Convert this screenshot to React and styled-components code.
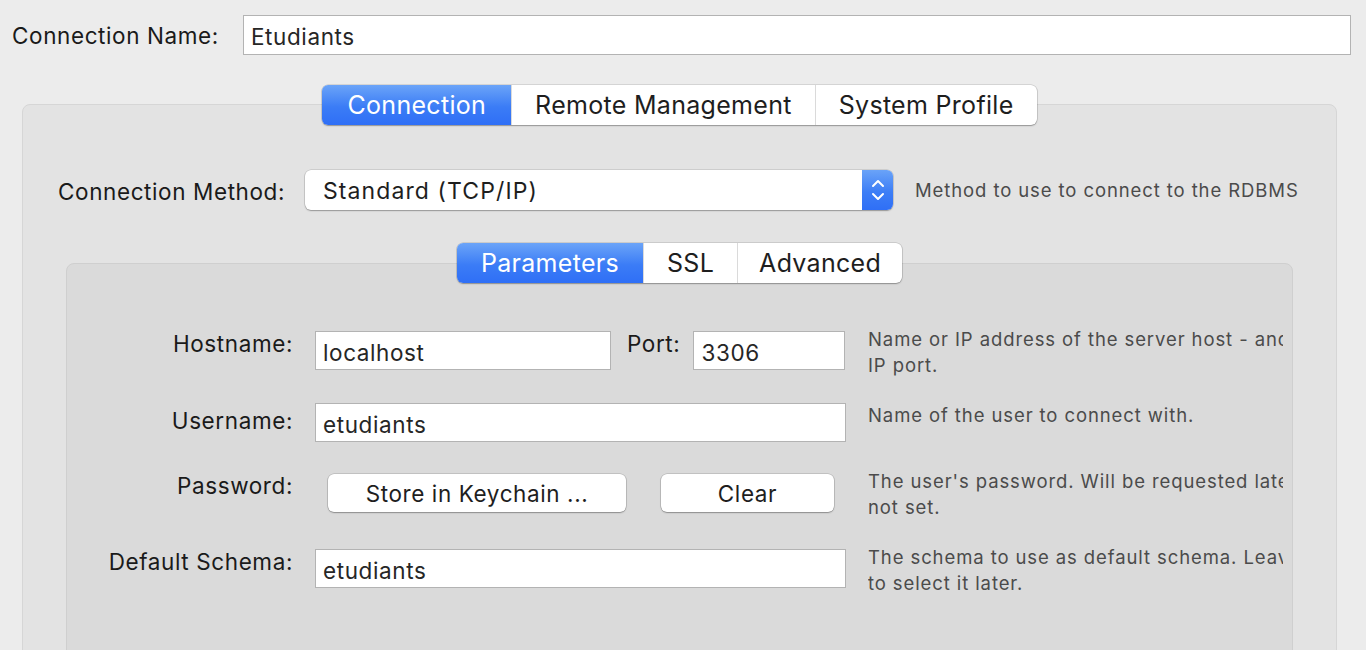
import React from "react";
import styled, { createGlobalStyle, css } from "styled-components";

const Global = createGlobalStyle`
  html, body { margin: 0; padding: 0; }
  body {
    background: #ececec;
    font-family: "Inter", "Noto Sans", "Liberation Sans", sans-serif;
    color: #1c1c1c;
    -webkit-font-smoothing: antialiased;
  }
`;

const Page = styled.div`
  width: 1366px;
  height: 650px;
  overflow: hidden;
  background: #ececec;
`;

const NameRow = styled.div`
  display: flex;
  align-items: center;
  padding: 15px 15px 0 12px;
`;

const Label = styled.div`
  width: ${(p) => p.$w}px;
  flex: none;
  font-size: 22.5px;
  letter-spacing: 0.6px;
  line-height: 26px;
  color: #1a1a1a;
  white-space: nowrap;
  margin-top: ${(p) => p.$mt || 0}px;
`;

const TextBox = styled.div`
  box-sizing: border-box;
  height: ${(p) => p.$h || 39}px;
  ${(p) => (p.$w ? css`width: ${p.$w}px; flex: none;` : css`flex: 1;`)}
  background: #fff;
  border: 1px solid #b3b3b3;
  padding: 3px 0 0 7px;
  display: flex;
  align-items: center;
  font-size: 22.5px;
  letter-spacing: 0.6px;
  color: #262626;
  white-space: nowrap;
`;

const OuterPanel = styled.div`
  margin: 49px 29px 0 22px;
  height: 600px;
  box-sizing: border-box;
  background: #e3e3e3;
  border: 1px solid #d6d6d6;
  border-radius: 8px;
`;

const TabBar = styled.div`
  display: flex;
  width: fit-content;
  margin: ${(p) => p.$top}px auto 0;
  height: 40px;
  border-radius: 6px;
  background: #fff;
  overflow: hidden;
  box-shadow: 0 0 0 0.5px rgba(0, 0, 0, 0.2), 0 1px 1.5px rgba(0, 0, 0, 0.28);
`;

const Tab = styled.div`
  padding: 0 ${(p) => p.$pad || 23}px;
  font-size: 25px;
  letter-spacing: 0.3px;
  line-height: 40px;
  color: #1e1e1e;
  white-space: nowrap;
  & + & {
    border-left: 1px solid #dadada;
  }
  ${(p) =>
    p.$active &&
    css`
      color: #fff;
      background: linear-gradient(to bottom, #6ba4f8 0%, #3b7cf6 55%, #2f6ff6 100%);
      & + * { border-left-color: transparent; }
    `}
`;

const MethodRow = styled.div`
  display: flex;
  align-items: center;
  margin-top: 45px;
  padding-left: 35px;
`;

const Select = styled.div`
  box-sizing: border-box;
  width: 588px;
  height: 40px;
  flex: none;
  display: flex;
  background: #fff;
  border-radius: 6px;
  box-shadow: 0 0 0 0.5px rgba(0, 0, 0, 0.18), 0 1px 1.5px rgba(0, 0, 0, 0.28);
  overflow: hidden;
`;

const SelectValue = styled.div`
  flex: 1;
  padding: 1px 0 0 18px;
  display: flex;
  align-items: center;
  font-size: 23px;
  letter-spacing: 1.1px;
  color: #1e1e1e;
`;

const Stepper = styled.div`
  width: 31px;
  flex: none;
  display: flex;
  align-items: center;
  justify-content: center;
  background: linear-gradient(to bottom, #6aa3f8 0%, #3d7ef6 55%, #2f6ff6 100%);
`;

const Hint = styled.div`
  margin-left: ${(p) => p.$ml || 0}px;
  margin-top: ${(p) => p.$mt || 0}px;
  font-size: 18.5px;
  line-height: 26px;
  letter-spacing: 0.9px;
  color: #4b4b4b;
  white-space: nowrap;
  overflow: hidden;
`;

const InnerPanel = styled.div`
  margin: 53px 43px 0;
  height: 500px;
  box-sizing: border-box;
  background: #dadada;
  border: 1px solid #cfcfcf;
  border-radius: 8px;
`;

const Params = styled.div`
  padding-top: 48px;
`;

const ParamRow = styled.div`
  display: grid;
  grid-template-columns: 226px 531px 415px;
  column-gap: 22px;
  align-items: start;
  height: ${(p) => p.$h}px;
  margin-top: ${(p) => p.$mt || 0}px;
`;

const ParamLabel = styled.div`
  text-align: right;
  font-size: 22.5px;
  letter-spacing: 0.6px;
  line-height: 26px;
  color: #1a1a1a;
  margin-top: ${(p) => p.$mt || 0}px;
  white-space: nowrap;
`;

const Field = styled.div`
  display: flex;
  align-items: flex-start;
`;

const InlineLabel = styled.div`
  font-size: 22.5px;
  letter-spacing: 0.6px;
  line-height: 26px;
  color: #1a1a1a;
  margin: ${(p) => p.$mt || 0}px 13px 0 16px;
`;

const Button = styled.div`
  box-sizing: border-box;
  width: ${(p) => p.$w}px;
  height: 38px;
  margin-left: ${(p) => p.$ml}px;
  padding-top: 1px;
  background: #fff;
  border-radius: 6px;
  box-shadow: 0 0 0 0.5px rgba(0, 0, 0, 0.22), 0 1px 1.5px rgba(0, 0, 0, 0.28);
  display: flex;
  align-items: center;
  justify-content: center;
  font-size: 22.5px;
  letter-spacing: 0.6px;
  color: #1e1e1e;
  white-space: nowrap;
`;

const HintLine = styled.div``;

const Chevrons = () => (
  <svg width="16" height="30" viewBox="0 0 16 30" fill="none">
    <path d="M3 11 L8 6 L13 11" stroke="#fff" strokeWidth="2" strokeLinecap="round" strokeLinejoin="round" />
    <path d="M3 19 L8 24 L13 19" stroke="#fff" strokeWidth="2" strokeLinecap="round" strokeLinejoin="round" />
  </svg>
);

export default function App() {
  return (
    <Page>
      <Global />
      <NameRow>
        <Label $w={231} $mt={2}>Connection Name:</Label>
        <TextBox $h={40}>Etudiants</TextBox>
      </NameRow>
      <OuterPanel>
        <TabBar $top={-20}>
          <Tab $active $pad={25}>Connection</Tab>
          <Tab>Remote Management</Tab>
          <Tab>System Profile</Tab>
        </TabBar>
        <MethodRow>
          <Label $w={247} $mt={4}>Connection Method:</Label>
          <Select>
            <SelectValue>Standard (TCP/IP)</SelectValue>
            <Stepper>
              <Chevrons />
            </Stepper>
          </Select>
          <Hint $ml={22}>Method to use to connect to the RDBMS</Hint>
        </MethodRow>
        <InnerPanel>
          <TabBar $top={-21}>
            <Tab $active $pad={24}>Parameters</Tab>
            <Tab>SSL</Tab>
            <Tab $pad={21}>Advanced</Tab>
          </TabBar>
          <Params>
            <ParamRow $h={39}>
              <ParamLabel $mt={0}>Hostname:</ParamLabel>
              <Field>
                <TextBox $w={296}>localhost</TextBox>
                <InlineLabel $mt={0}>Port:</InlineLabel>
                <TextBox $w={152}>3306</TextBox>
              </Field>
              <Hint $mt={-5}>
                <HintLine>Name or IP address of the server host - and TCP/</HintLine>
                <HintLine>IP port.</HintLine>
              </Hint>
            </ParamRow>
            <ParamRow $h={39} $mt={33}>
              <ParamLabel $mt={5}>Username:</ParamLabel>
              <Field>
                <TextBox $w={531}>etudiants</TextBox>
              </Field>
              <Hint $mt={-1}>Name of the user to connect with.</Hint>
            </ParamRow>
            <ParamRow $h={38} $mt={32}>
              <ParamLabel $mt={-1}>Password:</ParamLabel>
              <Field>
                <Button $w={298} $ml={13}>Store in Keychain ...</Button>
                <Button $w={173} $ml={35}>Clear</Button>
              </Field>
              <Hint $mt={-6}>
                <HintLine>The user's password. Will be requested later if it's</HintLine>
                <HintLine>not set.</HintLine>
              </Hint>
            </ParamRow>
            <ParamRow $h={39} $mt={37}>
              <ParamLabel $mt={0}>Default Schema:</ParamLabel>
              <Field>
                <TextBox $w={531}>etudiants</TextBox>
              </Field>
              <Hint $mt={-5}>
                <HintLine>The schema to use as default schema. Leave blank</HintLine>
                <HintLine>to select it later.</HintLine>
              </Hint>
            </ParamRow>
          </Params>
        </InnerPanel>
      </OuterPanel>
    </Page>
  );
}
